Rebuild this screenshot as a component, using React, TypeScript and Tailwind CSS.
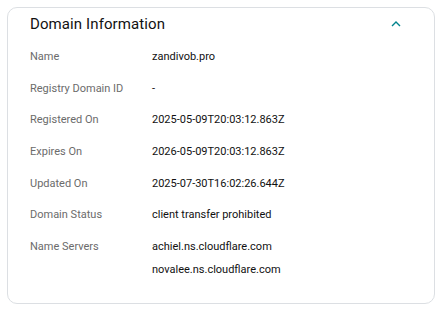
import React from 'react';

const rows: { label: string; values: string[] }[] = [
  { label: 'Name', values: ['zandivob.pro'] },
  { label: 'Registry Domain ID', values: ['-'] },
  { label: 'Registered On', values: ['2025-05-09T20:03:12.863Z'] },
  { label: 'Expires On', values: ['2026-05-09T20:03:12.863Z'] },
  { label: 'Updated On', values: ['2025-07-30T16:02:26.644Z'] },
  { label: 'Domain Status', values: ['client transfer prohibited'] },
  { label: 'Name Servers', values: ['achiel.ns.cloudflare.com', 'novalee.ns.cloudflare.com'] },
];

const App: React.FC = () => {
  return (
    <div className="w-[442px] h-[312px] bg-white p-[7px] font-['Roboto',sans-serif]">
      <div className="h-[297px] rounded-[10px] border border-[#dcdfe3] pl-[22px] pr-[28px]">
        {/* Header */}
        <div className="flex items-center justify-between h-[30px] mt-[1px]">
          <h3 className="text-[15px] font-normal text-[#111111] tracking-[0.1px]">Domain Information</h3>
          <svg width="10" height="6" viewBox="0 0 10 6" className="mr-[5px]">
            <path d="M1 5 L5 1 L9 5" fill="none" stroke="#00838c" strokeWidth="1.4" />
          </svg>
        </div>

        {/* Rows */}
        <div className="mt-[11px] flex flex-col gap-[17.7px]">
          {rows.map((row) => (
            <div key={row.label} className="flex text-[11px] leading-[14px]">
              <div className="w-[122px] text-[#6b6b6b]">{row.label}</div>
              <div className="flex flex-col gap-[8.5px] text-[#111111]">
                {row.values.map((v) => (
                  <span key={v}>{v}</span>
                ))}
              </div>
            </div>
          ))}
        </div>
      </div>
    </div>
  );
};

export default App;
